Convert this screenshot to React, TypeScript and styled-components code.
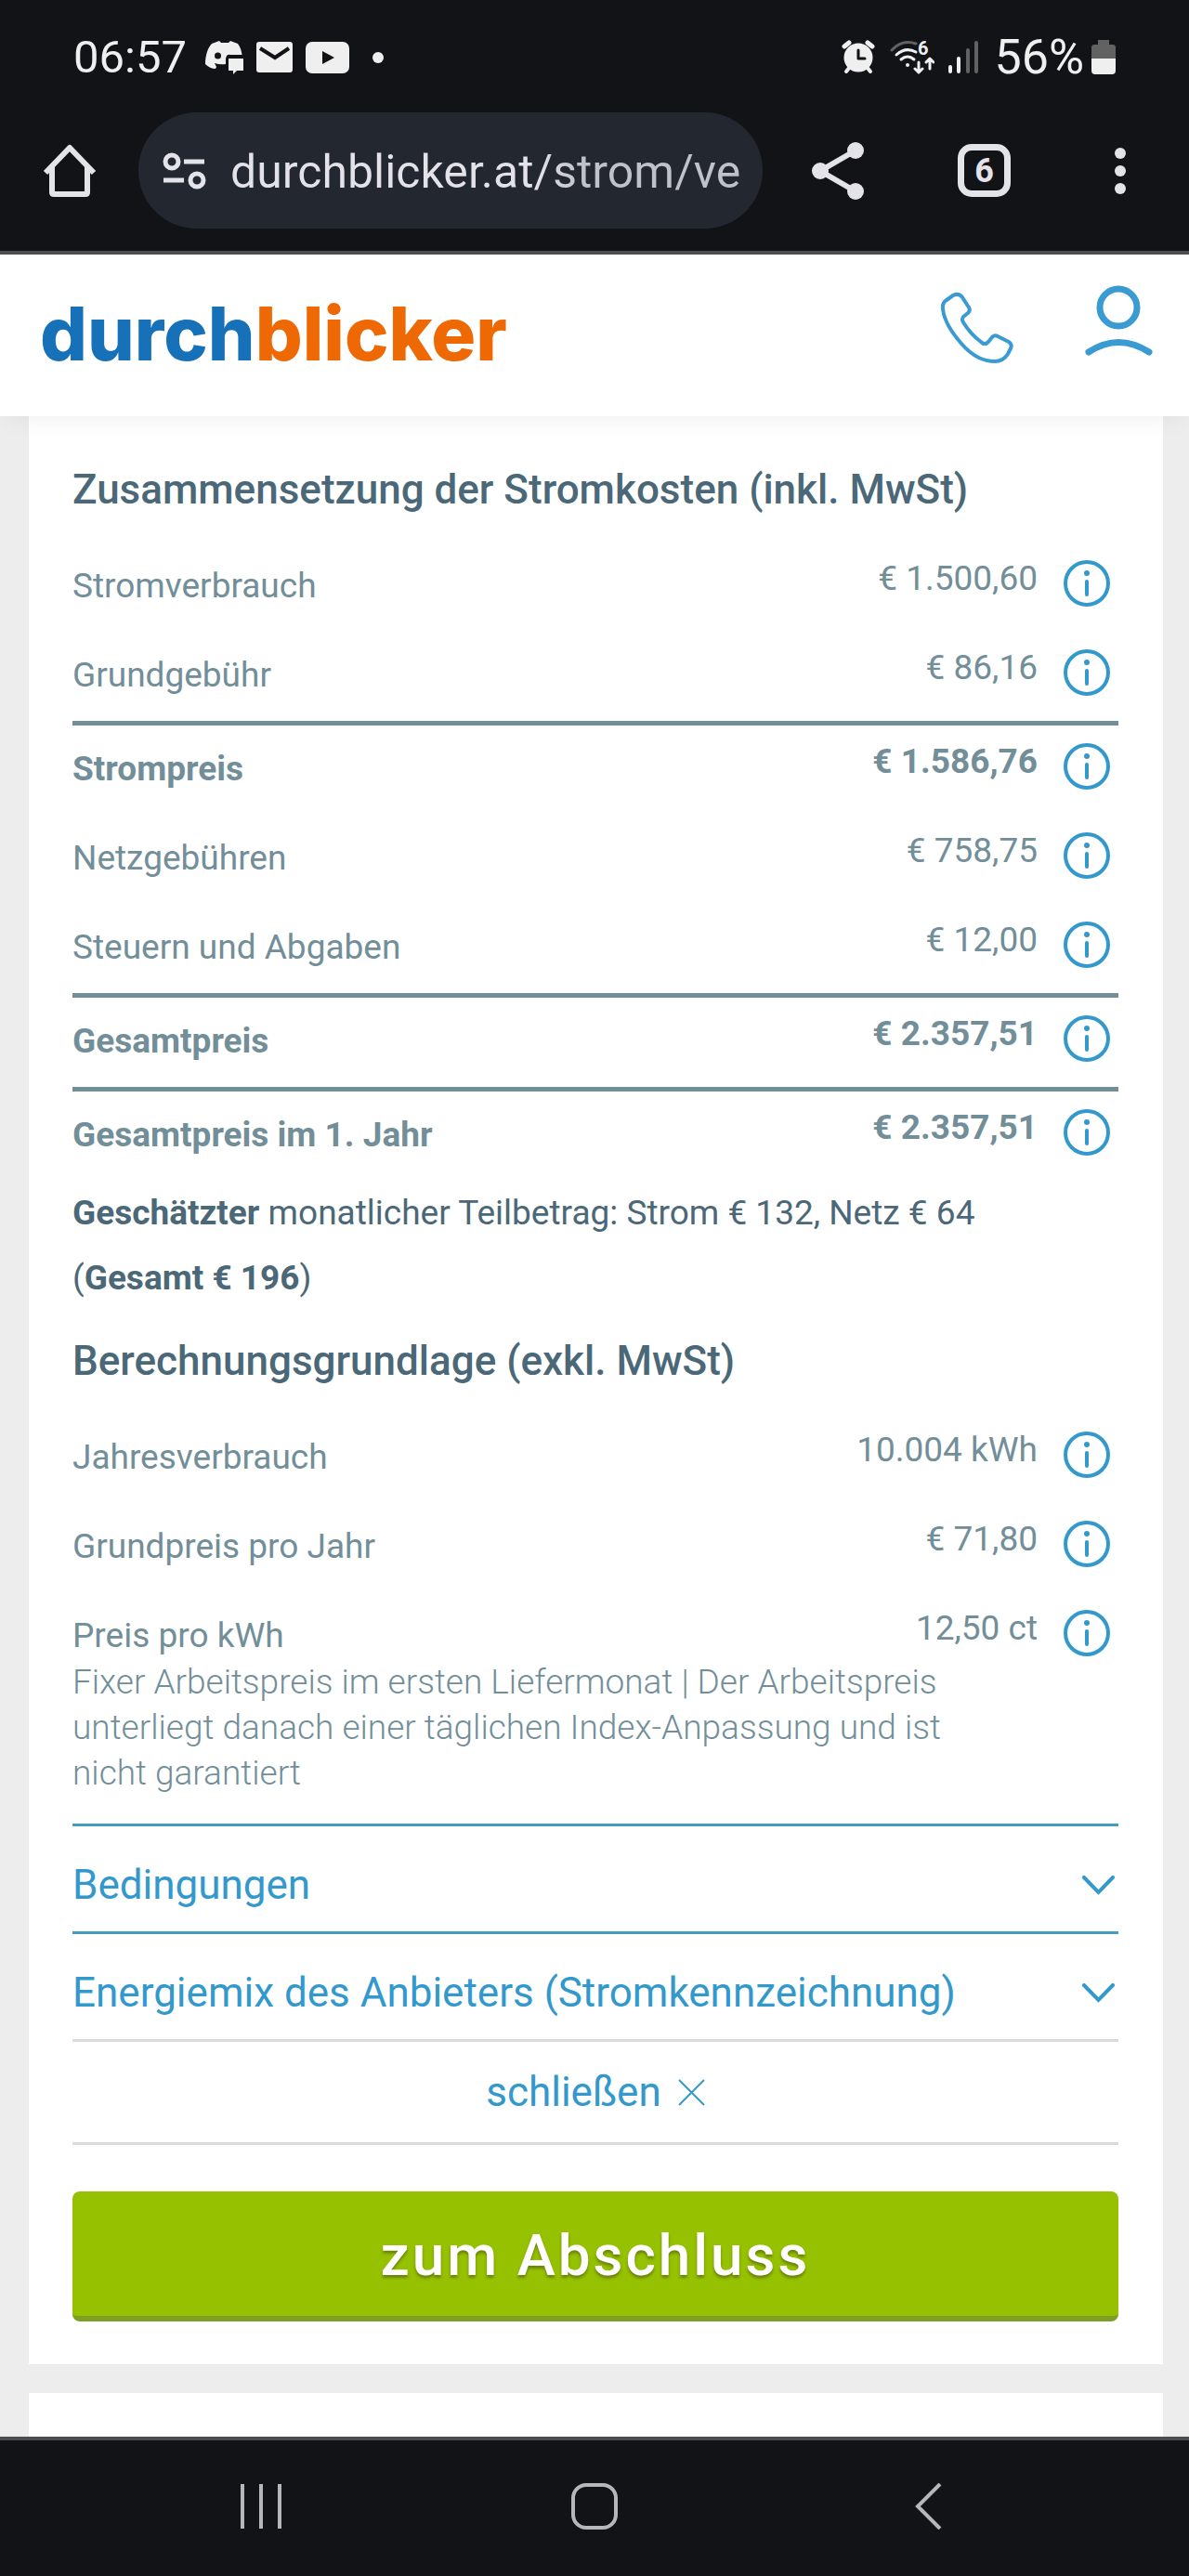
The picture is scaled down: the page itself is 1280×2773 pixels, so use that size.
import React from "react";
import styled, { createGlobalStyle } from "styled-components";

const Global = createGlobalStyle`
  * { box-sizing: border-box; }
  body { margin: 0; background: #ededed; font-family: Roboto, "Liberation Sans", sans-serif; color: #4b6878; }
  button { border: 0; padding: 0; background: none; font: inherit; color: inherit; cursor: pointer; }
  a { color: inherit; text-decoration: none; }
  svg { display: block; flex: none; }
  h2, p { margin: 0; }
`;

const Screen = styled.div`
  display: flex;
  flex-direction: column;
  min-height: 100vh;
`;

const Chrome = styled.div`
  background: #121317;
  color: #e4e3ea;
  border-bottom: 4px solid #4d4c50;
`;

const StatusBar = styled.div`
  display: flex;
  align-items: center;
  justify-content: space-between;
  height: 121px;
  padding: 2px 79px 0;
  line-height: 60px;
  color: #efefef;
`;

const StatusGroup = styled.div`
  display: flex;
  align-items: center;
  gap: 14px;
`;

const Clock = styled.span`
  margin-right: 6px;
  font-size: 49px;
`;

const Percent = styled.span`
  font-size: 52px;
  margin: 0 -6px 0 2px;
`;

const Toolbar = styled.div`
  display: flex;
  align-items: center;
  height: 149px;
  padding: 0 56px 24px 46px;
`;

const AddressBar = styled.div`
  flex: 1;
  display: flex;
  align-items: center;
  gap: 26px;
  min-width: 0;
  height: 125px;
  margin: 0 52px 0 45px;
  padding: 0 20px 0 25px;
  border-radius: 63px;
  background: #23272f;
`;

const Address = styled.input`
  flex: 1;
  min-width: 0;
  border: 0;
  padding: 3px 0 0;
  outline: 0;
  font: 400 50px/60px Roboto, sans-serif;
  color: transparent;
  background: linear-gradient(90deg, #e3e2e9 60%, #bfc1cb 68%);
  background-clip: text;
  -webkit-background-clip: text;
`;

const ToolGroup = styled.div`
  flex: none;
  display: flex;
  align-items: center;
  justify-content: space-between;
  width: 351px;
`;

const TabCount = styled.button`
  display: flex;
  align-items: center;
  justify-content: center;
  width: 57px;
  height: 57px;
  border: 7px solid #e4e3ea;
  border-radius: 15px;
  font-size: 36px;
  font-weight: 700;
  line-height: 40px;
`;

const SiteHeader = styled.header`
  position: relative;
  display: flex;
  align-items: flex-start;
  justify-content: space-between;
  height: 174px;
  padding: 31px 36px 0 43px;
  background: #fff;
  box-shadow: 0 12px 24px -8px rgba(0, 0, 0, 0.06);
`;

const Logo = styled.a`
  font-family: Inter, sans-serif;
  font-size: 80px;
  line-height: 108px;
  font-weight: 800;
  color: #1671b9;
  span { color: #ee6804; }
`;

const HeaderActions = styled.div`
  display: flex;
  gap: 69px;
  color: #3a9ad2;
`;

const Main = styled.main`
  flex: 1;
  display: flex;
  flex-direction: column;
  gap: 31px;
  padding: 0 28px 0 31px;
`;

const Card = styled.section`
  padding: 43px 48px 46px 47px;
  background: #fff;
`;

const NextCard = styled.section`
  flex: 1;
  min-height: 40px;
  background: #fff;
`;

const Heading = styled.h2`
  font-size: 44px;
  line-height: 73px;
  font-weight: 500;
  color: #4b6878;
`;

const Table = styled.table`
  width: 100%;
  margin-top: 20px;
  border-spacing: 0;
  color: #728e99;
  font-size: 37px;
  line-height: 49px;
`;

const Row = styled.tr<{ $total?: boolean }>`
  font-weight: ${(p) => (p.$total ? 700 : 400)};
  > * { border-top: ${(p) => (p.$total ? "5px solid #728e99" : "0")}; }
`;

const Label = styled.th<{ $height: number }>`
  height: ${(p) => p.$height}px;
  padding: 22px 0 0;
  font-weight: inherit;
  text-align: left;
  vertical-align: top;
`;

const Value = styled.td`
  width: 240px;
  padding: 14px 0 0;
  text-align: right;
  vertical-align: top;
  white-space: nowrap;
`;

const InfoCell = styled.td`
  width: 87px;
  padding: 19px 9px 0 0;
  vertical-align: top;
`;

const InfoButton = styled.button`
  display: block;
  margin-left: auto;
`;

const NoteCell = styled.td`
  padding: 0 0 30px;
`;

const Note = styled.p`
  max-width: 950px;
  font-weight: 300;
`;

const Estimate = styled.p`
  max-width: 1060px;
  padding-bottom: 18px;
  font-size: 37px;
  line-height: 70px;
`;

const Accordion = styled.button<{ $last?: boolean }>`
  display: flex;
  align-items: center;
  justify-content: space-between;
  width: 100%;
  height: ${(p) => (p.$last ? 119 : 116)}px;
  padding: 13px 4px 0 0;
  border-top: 3px solid #459bc2;
  border-bottom: ${(p) => (p.$last ? "3px solid #d9dada" : "0")};
  color: #3399cc;
  font-size: 44px;
  line-height: 58px;
`;

const Close = styled.button`
  display: flex;
  align-items: center;
  justify-content: center;
  gap: 18px;
  width: 100%;
  height: 111px;
  border-bottom: 3px solid #d9dada;
  color: #3399cc;
  font-size: 44px;
  line-height: 58px;
`;

const Submit = styled.button`
  width: 100%;
  height: 140px;
  margin-top: 50px;
  padding-top: 4px;
  border-bottom: 6px solid #7e9f24;
  border-radius: 8px;
  background: #95c100;
  color: #fff;
  font-size: 62px;
  line-height: 80px;
  font-weight: 500;
  letter-spacing: 3px;
  text-shadow: 0 3px 3px rgba(80, 90, 20, 0.6);
`;

const NavBar = styled.nav`
  display: flex;
  align-items: center;
  height: 150px;
  padding: 0 101px 4px;
  border-top: 4px solid #4a4b50;
  background: #121317;
  color: #b6b7bb;
`;

const NavButton = styled.button`
  flex: 1;
  display: flex;
  justify-content: center;
`;

const InfoIcon = () => (
  <svg width="50" height="50" viewBox="0 0 50 50" fill="none" stroke="#3399cc">
    <circle cx="25" cy="25" r="23" strokeWidth="4" />
    <path d="M25 23v14" strokeWidth="4" strokeLinecap="round" />
    <circle cx="25" cy="14" r="3" fill="#3399cc" stroke="none" />
  </svg>
);

const Chevron = () => (
  <svg width="35" height="21" viewBox="0 0 35 21" fill="none" stroke="currentColor" strokeWidth="4" strokeLinecap="round">
    <path d="M2 2l15.500 16L33 2" />
  </svg>
);

type Item = { label: string; value: string; total?: boolean; note?: string };

const costs: Item[] = [
  { label: "Stromverbrauch", value: "€ 1.500,60" },
  { label: "Grundgebühr", value: "€ 86,16" },
  { label: "Strompreis", value: "€ 1.586,76", total: true },
  { label: "Netzgebühren", value: "€ 758,75" },
  { label: "Steuern und Abgaben", value: "€ 12,00" },
  { label: "Gesamtpreis", value: "€ 2.357,51", total: true },
  { label: "Gesamtpreis im 1. Jahr", value: "€ 2.357,51", total: true },
];

const basis: Item[] = [
  { label: "Jahresverbrauch", value: "10.004 kWh" },
  { label: "Grundpreis pro Jahr", value: "€ 71,80" },
  {
    label: "Preis pro kWh",
    value: "12,50 ct",
    note: "Fixer Arbeitspreis im ersten Liefermonat | Der Arbeitspreis unterliegt danach einer täglichen Index-Anpassung und ist nicht garantiert",
  },
];

const PriceTable = ({ items }: { items: Item[] }) => (
  <Table>
    <tbody>
      {items.map((item) => (
        <React.Fragment key={item.label}>
          <Row $total={item.total}>
            <Label scope="row" $height={item.note ? 72 : item.total ? 101 : 96}>
              {item.label}
            </Label>
            <Value>{item.value}</Value>
            <InfoCell>
              <InfoButton aria-label={`Info: ${item.label}`}>
                <InfoIcon />
              </InfoButton>
            </InfoCell>
          </Row>
          {item.note && (
            <tr>
              <NoteCell colSpan={3}>
                <Note>{item.note}</Note>
              </NoteCell>
            </tr>
          )}
        </React.Fragment>
      ))}
    </tbody>
  </Table>
);

export default function App() {
  return (
    <Screen>
      <Global />
      <Chrome>
        <StatusBar>
          <StatusGroup>
            <Clock>06:57</Clock>
            <svg width="41" height="36" viewBox="0 0 41 36" fill="#efefef">
              <path d="M0 25C0 15 3 7 7 3l8-3 2 2h8l2-2 8 3c3 4 4 8 4.500 12H27q-2-1-4 1l-1 3v6q-6 1-12-1l2 4-1 2Q5 30 0 25z" />
              <circle cx="13.500" cy="16" r="3.500" fill="#121317" />
              <path d="M25 19h16v13h-7l-4 4v-4h-5z" />
            </svg>
            <svg width="39" height="33" viewBox="0 0 39 33">
              <rect width="39" height="33" rx="3" fill="#efefef" />
              <path d="M4 7l16 10L35 7" fill="none" stroke="#121317" strokeWidth="4" />
            </svg>
            <svg width="47" height="34" viewBox="0 0 47 34">
              <rect width="47" height="34" rx="7" fill="#efefef" />
              <path d="M18 10l13 7-13 7z" fill="#121317" />
            </svg>
            <svg width="38" height="12" viewBox="0 0 38 12" fill="#efefef">
              <circle cx="17" cy="6" r="6" />
            </svg>
          </StatusGroup>
          <StatusGroup>
            <svg width="38" height="37" viewBox="0 0 38 37" fill="none" stroke="#efefef" strokeLinecap="round">
              <circle cx="18" cy="19" r="15.500" fill="#efefef" stroke="none" />
              <path d="M3 7l5-4M33 7l-5-4" strokeWidth="5" />
              <path d="M5 34l4-5M31 34l-4-5" strokeWidth="4" />
              <path d="M18 11v9h7" stroke="#121317" strokeWidth="3" strokeLinejoin="round" />
            </svg>
            <svg width="48" height="45" viewBox="0 -4 48 45" fill="none" stroke="#efefef" strokeWidth="3" strokeLinecap="round" strokeLinejoin="round">
              <path d="M2 11Q13-1 28 4" stroke="#626262" />
              <path d="M7 16Q17 7 28 13M12 21q7-6 14 0" />
              <circle cx="19" cy="27" r="2" fill="#efefef" stroke="none" />
              <path d="M31 24v11M27 31l4 4 4-4M43 31V20M39 24l4-4 4 4" />
              <text x="30" y="16" fill="#efefef" stroke="none" fontSize="20" fontWeight="700">6</text>
            </svg>
            <svg width="34" height="37" viewBox="0 0 34 37" fill="none" strokeWidth="4" strokeLinecap="round">
              <path d="M3 29v5M12 20v14" stroke="#efefef" />
              <path d="M22 11v23M31 3v31" stroke="#626262" />
            </svg>
            <Percent>56%</Percent>
            <svg width="26" height="37" viewBox="0 0 26 37">
              <path d="M7 0h12v5h4q3 0 3 3v12H0V8q0-3 3-3h4z" fill="#626262" />
              <path d="M0 20h26v13q0 4-4 4H4q-4 0-4-4z" fill="#efefef" />
            </svg>
          </StatusGroup>
        </StatusBar>
        <Toolbar>
          <button aria-label="Startseite">
            <svg width="58" height="58" viewBox="0 0 58 58" fill="none" stroke="#e4e3ea" strokeWidth="6" strokeLinejoin="round">
              <path d="M3 31L29 4l26 27" />
              <path d="M10 24v28q0 2 2 2h34q2 0 2-2V24" />
            </svg>
          </button>
          <AddressBar>
            <svg width="48" height="40" viewBox="0 0 48 40" fill="none" stroke="#e4e3ea" strokeWidth="5">
              <circle cx="11" cy="10" r="7" />
              <circle cx="38" cy="30" r="7" />
              <path d="M24 10h22M2 30h22" />
            </svg>
            <Address aria-label="Adresse" defaultValue="durchblicker.at/strom/ve" />
          </AddressBar>
          <ToolGroup>
            <button aria-label="Teilen">
              <svg width="58" height="64" viewBox="0 0 58 64" fill="#e4e3ea" stroke="#e4e3ea">
                <path d="M48 10L10 32l38 22" fill="none" strokeWidth="6" />
                <circle cx="48" cy="10" r="9" stroke="none" />
                <circle cx="10" cy="32" r="9" stroke="none" />
                <circle cx="48" cy="54" r="9" stroke="none" />
              </svg>
            </button>
            <TabCount aria-label="Tabs">6</TabCount>
            <button aria-label="Menü">
              <svg width="36" height="50" viewBox="0 0 36 50" fill="#e4e3ea">
                <circle cx="18" cy="6" r="6" />
                <circle cx="18" cy="25" r="6" />
                <circle cx="18" cy="44" r="6" />
              </svg>
            </button>
          </ToolGroup>
        </Toolbar>
      </Chrome>
      <SiteHeader>
        <Logo href="#">
          durch<span>blicker</span>
        </Logo>
        <HeaderActions>
          <button aria-label="Telefon">
            <svg width="86" height="90" viewBox="0 0 86 90" fill="none" stroke="currentColor" strokeWidth="4" strokeLinejoin="round">
              <path d="M5 28Q4 21 9 18L16 13Q22 10 26 15L33 26Q35 29 32 32L27 36Q25 39 27 42Q35 55 46 63Q50 67 54 63L58 58Q61 55 64 57L76 63Q80 66 78 70L75 76Q70 84 61 84Q42 84 26 66Q7 45 5 28z" />
            </svg>
          </button>
          <button aria-label="Benutzerkonto">
            <svg width="79" height="90" viewBox="0 0 79 90" fill="none" stroke="currentColor" strokeWidth="7" strokeLinecap="round">
              <circle cx="39" cy="26" r="20" />
              <path d="M7 74Q39 53 72 74" />
            </svg>
          </button>
        </HeaderActions>
      </SiteHeader>
      <Main>
        <Card>
          <Heading>Zusammensetzung der Stromkosten (inkl. MwSt)</Heading>
          <PriceTable items={costs} />
          <Estimate>
            <b>Geschätzter</b> <span>monatlicher Teilbetrag: Strom € 132, Netz € 64</span> <span>(</span>
            <b>Gesamt € 196</b>
            <span>)</span>
          </Estimate>
          <Heading>Berechnungsgrundlage (exkl. MwSt)</Heading>
          <PriceTable items={basis} />
          <Accordion>
            Bedingungen <Chevron />
          </Accordion>
          <Accordion $last>
            Energiemix des Anbieters (Stromkennzeichnung) <Chevron />
          </Accordion>
          <Close>
            schließen
            <svg width="29" height="29" viewBox="0 0 29 29" fill="none" stroke="currentColor" strokeWidth="2">
              <path d="M1 1l27 27M28 1L1 28" />
            </svg>
          </Close>
          <Submit>zum Abschluss</Submit>
        </Card>
        <NextCard />
      </Main>
      <NavBar>
        <NavButton aria-label="Letzte Apps">
          <svg width="46" height="50" viewBox="0 0 46 50" fill="none" stroke="currentColor" strokeWidth="4">
            <path d="M3 1v48M23 1v48M43 1v48" />
          </svg>
        </NavButton>
        <NavButton aria-label="Home">
          <svg width="50" height="50" viewBox="0 0 50 50" fill="none" stroke="currentColor" strokeWidth="4">
            <rect x="2" y="2" width="46" height="46" rx="14" />
          </svg>
        </NavButton>
        <NavButton aria-label="Zurück">
          <svg width="29" height="50" viewBox="0 0 29 50" fill="none" stroke="currentColor" strokeWidth="4">
            <path d="M27 1L3 25l24 24" />
          </svg>
        </NavButton>
      </NavBar>
    </Screen>
  );
}
